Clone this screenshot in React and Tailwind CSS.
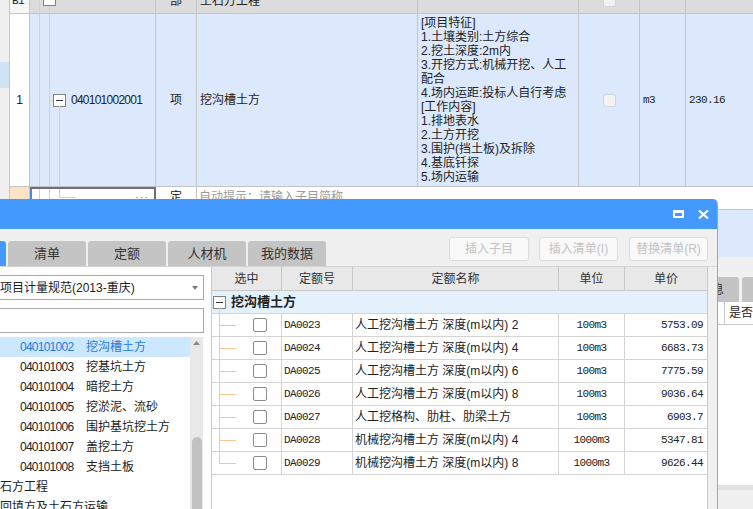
import React from 'react';

const features = [
  '[项目特征]',
  '1.土壤类别:土方综合',
  '2.挖土深度:2m内',
  '3.开挖方式:机械开挖、人工',
  '配合',
  '4.场内运距:投标人自行考虑',
  '[工作内容]',
  '1.排地表水',
  '2.土方开挖',
  '3.围护(挡土板)及拆除',
  '4.基底钎探',
  '5.场内运输',
];

const clauses = [
  ['040101002', '挖沟槽土方', true],
  ['040101003', '挖基坑土方'],
  ['040101004', '暗挖土方'],
  ['040101005', '挖淤泥、流砂'],
  ['040101006', '围护基坑挖土方'],
  ['040101007', '盖挖土方'],
  ['040101008', '支挡土板'],
];

const quotas = [
  ['DA0023', '人工挖沟槽土方 深度(m以内) 2', '100m3', '5753.09'],
  ['DA0024', '人工挖沟槽土方 深度(m以内) 4', '100m3', '6683.73'],
  ['DA0025', '人工挖沟槽土方 深度(m以内) 6', '100m3', '7775.59'],
  ['DA0026', '人工挖沟槽土方 深度(m以内) 8', '100m3', '9036.64'],
  ['DA0027', '人工挖格构、肋柱、肋梁土方', '100m3', '6903.7'],
  ['DA0028', '机械挖沟槽土方 深度(m以内) 4', '1000m3', '5347.81'],
  ['DA0029', '机械挖沟槽土方 深度(m以内) 8', '1000m3', '9626.44'],
];

// tabs of the lower panel; only the last ones peek out from behind the dialog
const bottomTabs = ['', '', '', '', '', '', '', '', '工程信息', '备注'];

const TreeBox = () => (
  <div className="w-[13px] h-[13px] shrink-0 border border-[#808080] bg-white flex items-center justify-center">
    <div className="w-[7px] h-px bg-[#333]" />
  </div>
);

const Check = () => (
  <div className="w-[13px] h-[13px] rounded-[3px] border border-[#d4d4d4] bg-[#f3f3f3]" />
);

function TopTable() {
  return (
    <div className="flex">
      {/* left strip */}
      <div className="w-[10px] shrink-0 flex flex-col bg-[#f0f0f0] border-r border-[#c4c4c4]">
        <div className="h-[62px]" />
        <div className="h-[26px] bg-[#cfe2f6]" />
      </div>
      <div className="flex-1 flex flex-col min-w-0">
        {/* row A (cut at top) */}
        <div className="flex h-[14px] border-b border-[#c4c4c4] bg-[#dcdcdc] overflow-hidden leading-[14px]">
          <div className="w-[20px] shrink-0 border-r border-[#c4c4c4] bg-[#f7f7f7]">
            <div className="mt-[-6px] pl-[2px] font-['Liberation_Mono',monospace] tracking-[-0.6px] text-[11px]">B1</div>
          </div>
          <div className="relative w-[126px] shrink-0 border-r border-[#c4c4c4]">
            <div className="absolute left-[9px] top-0 bottom-0 w-px bg-[#f9c98f]" />
            <div className="absolute left-[19px] top-[6px] bottom-0 w-px bg-[#f9c98f]" />
            <div className="absolute left-[13px] top-[-7px]"><TreeBox /></div>
          </div>
          <div className="w-[41px] shrink-0 border-r border-[#c4c4c4] text-center">
            <div className="mt-[-6px]">部</div>
          </div>
          <div className="w-[221px] shrink-0 border-r border-[#c4c4c4]">
            <div className="mt-[-6px] pl-[3px]">土石方工程</div>
          </div>
          <div className="w-[161px] shrink-0 border-r border-[#c4c4c4]" />
          <div className="w-[61px] shrink-0 border-r border-[#c4c4c4] flex justify-center">
            <div className="mt-[-6px] h-[13px]"><Check /></div>
          </div>
          <div className="w-[46px] shrink-0 border-r border-[#c4c4c4]" />
          <div className="flex-1" />
        </div>

        {/* row B */}
        <div className="flex h-[173px] border-b border-[#c4c4c4] bg-[#dce9fc] leading-[14px]">
          <div className="w-[20px] shrink-0 border-r border-[#c4c4c4] bg-white flex items-center justify-center">1</div>
          <div className="relative w-[126px] shrink-0 border-r border-[#c4c4c4] flex items-center pl-[23px] gap-[5px]">
            <div className="absolute left-[9px] top-0 bottom-0 w-px bg-[#f9c98f]" />
            <div className="absolute left-[19px] top-0 bottom-0 w-px bg-[#f9c98f]" />
            <div className="absolute left-[19px] top-[86px] w-[4px] h-px bg-[#f9c98f]" />
            <div className="absolute left-[29px] top-[92px] bottom-0 w-px bg-[#f9c98f]" />
            <TreeBox />
            <span className="text-[12px] tracking-[-0.75px]">040101002001</span>
          </div>
          <div className="w-[41px] shrink-0 border-r border-[#c4c4c4] flex items-center justify-center">项</div>
          <div className="w-[221px] shrink-0 border-r border-[#c4c4c4] flex items-center pl-[3px]">挖沟槽土方</div>
          <div className="w-[161px] shrink-0 border-r border-[#c4c4c4] flex flex-col justify-center pl-[3px]">
            {features.map((f, i) => (
              <div key={i} className="whitespace-nowrap">{f}</div>
            ))}
          </div>
          <div className="w-[61px] shrink-0 border-r border-[#c4c4c4] flex items-center justify-center"><Check /></div>
          <div className="w-[46px] shrink-0 border-r border-[#c4c4c4] flex items-center pl-[3px] font-['Liberation_Mono',monospace] tracking-[-0.6px] text-[11px]">m3</div>
          <div className="flex-1 flex items-center pl-[3px] font-['Liberation_Mono',monospace] tracking-[-0.6px] text-[11px]">230.16</div>
        </div>

        {/* row C (editing row) */}
        <div className="flex h-[23px] border-b border-[#c4c4c4] bg-white leading-[14px]">
          <div className="w-[20px] shrink-0 border-r border-[#c4c4c4] bg-[#fde3c4]" />
          <div className="relative w-[126px] shrink-0 border-t-2 border-r-2 border-[#6f6f6f]">
            <div className="absolute left-0 top-0 bottom-0 w-[2px] bg-[#3b8ef0]" />
            <div className="absolute left-[9px] top-0 bottom-0 w-px bg-[#f9c98f]" />
            <div className="absolute left-[19px] top-0 bottom-0 w-px bg-[#f9c98f]" />
            <div className="absolute left-[29px] top-0 h-[8px] w-px bg-[#f9c98f]" />
            <div className="absolute left-[29px] top-[8px] w-[17px] h-px bg-[#f9c98f]" />
            <div className="absolute right-[5px] top-[4px] text-[#3b7fd8] text-[11px] leading-[8px] tracking-[1px]">···</div>
          </div>
          <div className="w-[41px] shrink-0 border-r border-[#c4c4c4] text-center pt-[3px]">定</div>
          <div className="flex-1 pl-[2px] pt-[3px] text-[#9c9c9c]">自动提示：请输入子目简称</div>
        </div>

        {/* row D */}
        <div className="h-[47px] bg-[#dce9fc]" />
      </div>
    </div>
  );
}

function BottomPanel() {
  return (
    <div className="flex flex-col">
      <div className="h-[20px]" />
      <div className="flex h-[25px] pl-[13px] gap-[3px] overflow-hidden">
        {bottomTabs.map((t, i) => (
          <div key={i} className="w-[78px] shrink-0 rounded-t-[3px] bg-[#c4c4c4] flex items-center justify-center text-[12px] text-[#333]">
            {t}
          </div>
        ))}
      </div>
      <div className="flex h-[23px] bg-white border-b border-[#c8c8c8] overflow-hidden">
        <div className="w-[725px] shrink-0 border-r border-[#c8c8c8]" />
        <div className="pl-[4px] flex items-center whitespace-nowrap text-[12px]">是否分包</div>
      </div>
      <div className="h-[160px] bg-white" />
      <div className="h-[5px] bg-[#e2e2e2]" />
    </div>
  );
}

function LeftPanel() {
  return (
    <div className="w-[211px] shrink-0 bg-white flex flex-col pt-[8px] pr-[7px]">
      <div className="ml-[-1px] h-[25px] shrink-0 border border-[#a8a8a8] bg-white flex items-center justify-between pr-[5px] whitespace-nowrap">
        <span className="text-[12px]">项目计量规范(2013-重庆)</span>
        <svg width="6" height="4" viewBox="0 0 6 4"><path d="M0 0 H6 L3 4 Z" fill="#777" /></svg>
      </div>
      <div className="ml-[-1px] mt-[8px] h-[25px] shrink-0 border border-[#a8a8a8] bg-white" />
      <div className="mt-[4px] flex flex-1 min-h-0">
        <div className="w-[190px] shrink-0 flex flex-col">
          {clauses.map(([code, name, sel]) => (
            <div
              key={code}
              className={sel ? 'h-[20px] flex items-center bg-[#cce8ff] text-[#1f7be0]' : 'h-[20px] flex items-center'}
            >
              <span className="w-[86px] pl-[20px] shrink-0 text-[12px] tracking-[-0.75px]">{code}</span>
              <span className="text-[12px]">{name}</span>
            </div>
          ))}
          <div className="h-[20px] flex items-center whitespace-nowrap">石方工程</div>
          <div className="h-[20px] flex items-center whitespace-nowrap">回填方及土石方运输</div>
        </div>
        <div className="w-[13px] shrink-0 bg-[#e8e8e8] flex flex-col items-center">
          <svg className="mt-[4px]" width="7" height="4" viewBox="0 0 7 4"><path d="M0 4 L3.5 0 L7 4 Z" fill="#8a8a8a" /></svg>
          <div className="h-[92px]" />
          <div className="w-[10px] flex-1 rounded-t-full bg-[#c2c2c2]" />
        </div>
      </div>
    </div>
  );
}

function QuotaGrid() {
  const cell = 'shrink-0 border-r border-[#d4d4d4]';
  return (
    <div className="flex-1 flex flex-col bg-white border-l border-r border-[#c8c8c8] text-[12px]">
      <div className="flex h-[24px] shrink-0 bg-[#e8e8e8] border-b border-[#c8c8c8] text-[#333]">
        <div className="w-[70px] shrink-0 border-r border-[#c8c8c8] flex items-center justify-center">选中</div>
        <div className="w-[71px] shrink-0 border-r border-[#c8c8c8] flex items-center justify-center">定额号</div>
        <div className="w-[206px] shrink-0 border-r border-[#c8c8c8] flex items-center justify-center">定额名称</div>
        <div className="w-[66px] shrink-0 border-r border-[#c8c8c8] flex items-center justify-center">单位</div>
        <div className="flex-1 flex items-center justify-center">单价</div>
      </div>
      <div className="relative h-[23px] shrink-0 bg-[#e3f1fd] border-b border-[#d4d4d4] flex items-center pl-[1px] gap-[5px]">
        <div className="absolute left-[7px] top-[17px] bottom-0 w-px bg-[#f9c98f]" />
        <TreeBox />
        <span className="text-[13px] font-bold text-[#222]">挖沟槽土方</span>
      </div>
      {quotas.map(([code, name, unit, price], i) => (
        <div key={code} className="flex h-[23px] shrink-0 border-b border-[#d4d4d4]">
          <div className={`relative w-[70px] ${cell} flex items-center pl-[41px]`}>
            <div className={i === quotas.length - 1 ? 'absolute left-[7px] top-0 h-[11px] w-px bg-[#f9c98f]' : 'absolute left-[7px] top-0 bottom-[-1px] w-px bg-[#f9c98f]'} />
            <div className="absolute left-[7px] top-[11px] w-[17px] h-px bg-[#f9c98f]" />
            <div className="w-[14px] h-[14px] rounded-[2px] border border-[#8c8c8c] bg-white" />
          </div>
          <div className={`w-[71px] ${cell} flex items-center pl-[2px] font-['Liberation_Mono',monospace] tracking-[-0.6px] text-[11px]`}>{code}</div>
          <div className={`w-[206px] ${cell} flex items-center pl-[2px] whitespace-nowrap`}>{name}</div>
          <div className={`w-[66px] ${cell} flex items-center justify-center font-['Liberation_Mono',monospace] tracking-[-0.6px] text-[11px]`}>{unit}</div>
          <div className="flex-1 flex items-center justify-end pr-[4px] font-['Liberation_Mono',monospace] tracking-[-0.6px] text-[11px]">{price}</div>
        </div>
      ))}
    </div>
  );
}

function Dialog() {
  return (
    <div className="absolute left-0 top-[199px] w-[718px] h-[330px] flex flex-col bg-[#f0f0f0] border-r border-[#9ea6b0] rounded-tr-[5px] overflow-hidden">
      <div className="h-[30px] shrink-0 bg-[#4499ff] flex items-center justify-end pr-[8px]">
        <div className="w-[11px] h-[8px] border-2 border-t-[3px] border-white" />
        <svg className="ml-[14px]" width="11" height="9" viewBox="0 0 11 9">
          <path d="M1 0.5 L10 8.5 M10 0.5 L1 8.5" stroke="#fff" strokeWidth="2.2" />
        </svg>
      </div>
      <div className="flex h-[37px] shrink-0 pt-[8px]">
        <div className="flex self-end gap-[2px] h-[25px]">
          <div className="w-[6px] rounded-tr-[3px] bg-[#4499ff]" />
          {['清单', '定额', '人材机', '我的数据'].map((t) => (
            <div key={t} className="w-[78px] rounded-t-[3px] bg-[#c4c4c4] flex items-center justify-center text-[13px] text-[#333]">
              {t}
            </div>
          ))}
        </div>
        <div className="ml-auto mr-[9px] flex self-start h-[24px] text-[12px] text-[#c2c2c2]">
          <div className="w-[80px] rounded-[3px] border border-[#dcdcdc] bg-[#f9f9f9] flex items-center justify-center">插入子目</div>
          <div className="ml-[10px] w-[79px] rounded-[3px] border border-[#dcdcdc] bg-[#f9f9f9] flex items-center justify-center">插入清单(I)</div>
          <div className="ml-[11px] w-[79px] rounded-[3px] border border-[#dcdcdc] bg-[#f9f9f9] flex items-center justify-center">替换清单(R)</div>
        </div>
      </div>
      <div className="flex flex-1 min-h-0 border-t border-[#d4d4d4]">
        <LeftPanel />
        <QuotaGrid />
        <div className="w-[9px] shrink-0" />
      </div>
    </div>
  );
}

export default function App() {
  return (
    <div className="relative w-[753px] h-[509px] overflow-hidden bg-[#f0f0f0] text-[12px] text-[#222] font-['Liberation_Sans','Noto_Sans_CJK_SC',sans-serif]">
      <TopTable />
      <BottomPanel />
      <Dialog />
    </div>
  );
}
